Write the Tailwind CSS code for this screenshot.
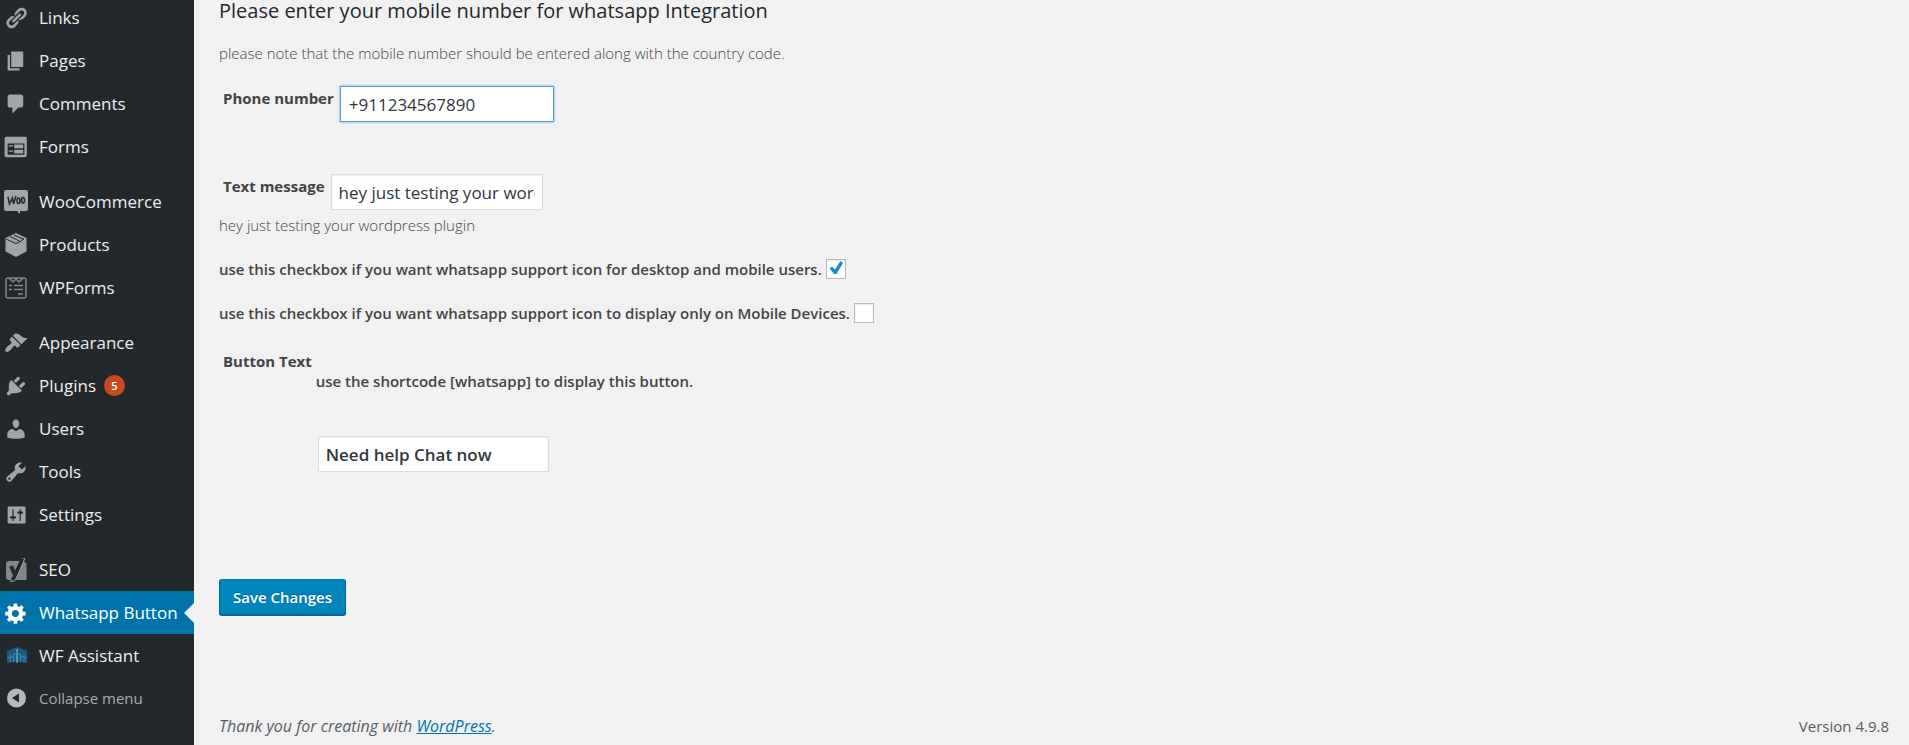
<!DOCTYPE html>
<html lang="en">
<head>
<meta charset="utf-8">
<title>Whatsapp Button</title>
<script src="https://cdn.jsdelivr.net/npm/@tailwindcss/browser@4"></script>
</head>
<body class="bg-[#f1f1f1] text-[#444] font-['Open_Sans','Noto_Sans',sans-serif] text-[15px] leading-5">
<div class="flex h-screen overflow-hidden">
  <nav aria-label="Admin menu" class="w-[194px] shrink-0 bg-[#23282d] text-[#eee] text-[17px] font-normal">
    <ul class="-mt-1 [&_a]:flex [&_a]:h-[43px] [&_a]:items-center [&_a]:gap-[11px] [&_a]:pl-1 [&_svg]:size-6 [&_svg]:shrink-0 [&_svg]:fill-[#a0a5aa]">
      <li><a href="#"><svg viewBox="0 0 20 20"><path d="M17.74 2.76c1.68 1.69 1.68 4.41 0 6.1l-1.53 1.52c-1.12 1.12-2.7 1.47-4.14 1.09l2.62-2.61.76-.77.76-.76c.84-.84.84-2.2 0-3.04-.84-.85-2.2-.85-3.04 0l-.77.76-3.38 3.38c-.37-1.44-.02-3.02 1.1-4.14l1.52-1.53c1.69-1.68 4.42-1.68 6.1 0zM8.59 13.43l5.34-5.34c.42-.42.42-1.1 0-1.52-.44-.43-1.13-.39-1.53 0l-5.33 5.34c-.42.42-.42 1.1 0 1.52.44.43 1.13.39 1.52 0zm-.76 2.29l4.14-4.15c.38 1.44.03 3.02-1.09 4.14l-1.52 1.53c-1.69 1.68-4.41 1.68-6.1 0-1.68-1.68-1.68-4.42 0-6.1l1.53-1.52c1.12-1.12 2.7-1.47 4.14-1.1l-4.14 4.15c-.85.84-.85 2.2 0 3.05.84.84 2.2.84 3.04 0z"/></svg>Links</a></li>
      <li><a href="#"><svg viewBox="0 0 20 20"><path d="M6 15V2h10v13H6zm-1 1h8v2H3V5h2v11z"/></svg>Pages</a></li>
      <li><a href="#"><svg viewBox="0 0 20 20"><path d="M5 2h9c1.1 0 2 .9 2 2v7c0 1.1-.9 2-2 2h-2l-5 5v-5H5c-1.1 0-2-.9-2-2V4c0-1.1.9-2 2-2z"/></svg>Comments</a></li>
      <li><a href="#"><svg viewBox="0 0 20 20"><path fill-rule="evenodd" d="M2 1.500h15.500q1.500 0 1.500 1.500v14q0 1.500-1.500 1.500H2Q.5 18.500.5 17V3Q.5 1.500 2 1.500zM3 7v9.500h14V7zM4 8.500h3.500v1H4zM8.500 8h7.500v3H8.500zM4 13h3.500v1H4zM8.500 12.300h7.500v3.200H8.500z"/></svg>Forms</a></li>
      <li class="mt-3"><a href="#"><svg viewBox="0 0 24 24"><path d="M2 0h20q2 0 2 2v17q0 2-2 2h-6v3l-3-3H2q-2 0-2-2V2Q0 0 2 0z"/><path class="fill-none stroke-[#23282d] stroke-[1.500]" d="M4 7l1.500 7L8.500 8l1 6L12 6M14.500 8c-2 0-2 5.500 0 5.500s2-5.500 0-5.500zM19 7.500c-2 0-2 5.500 0 5.500s2-5.500 0-5.500z"/></svg>WooCommerce</a></li>
      <li><a href="#"><svg viewBox="0 0 24 24"><path d="M12 0l10.500 5v13.500L12 24 1.500 18.500V5z"/><path class="fill-none stroke-[#23282d]" d="M2 6L12 10.500 16.500 8.500M6 3.500L16.500 8.500 20 5.500M10 2L20 6.500"/></svg>Products</a></li>
      <li><a href="#"><svg viewBox="0 0 24 24"><path class="fill-none stroke-[#82878c] stroke-[1.500]" d="M4 2h16q2 0 2 2v16q0 2-2 2H4q-2 0-2-2V4q0-2 2-2zM5 2l4 4 3-3 3 3 4-4M5 9.500h3M10 9.500h9M5 13.500h3M10 13.500h9M14 18h5"/></svg>WPForms</a></li>
      <li class="mt-3"><a href="#"><svg viewBox="0 0 20 20"><path d="M14.480 11.060L7.410 3.990l1.500-1.500c.5-.56 2.300-.47 3.510.32 1.210.8 1.430 1.280 2.910 2.100 1.180.64 2.450 1.260 4.450.85zm-.71.71L6.700 4.700 4.930 6.470c-.39.39-.39 1.020 0 1.410l1.060 1.060c.39.39.39 1.030 0 1.420-.6.6-1.430 1.110-2.210 1.690-.35.26-.7.53-1.010.84C1.430 14.230.4 16.080 1.400 17.070c.99 1 2.840-.03 4.180-1.360.31-.31.58-.66.850-1.020.57-.78 1.080-1.610 1.690-2.210.39-.39 1.020-.39 1.410 0l1.060 1.060c.39.39 1.020.39 1.410 0z"/></svg>Appearance</a></li>
      <li><a href="#"><svg viewBox="0 0 20 20"><path d="M13.110 4.360L9.870 7.600 8 5.730l3.240-3.240c.35-.34 1.050-.2 1.560.32.520.51.660 1.210.310 1.550zm-8 1.770l.91-1.120 9.010 9.010-1.190.84c-.71.71-2.630 1.160-3.820 1.160H6.140L4.900 17.260c-.59.59-1.540.59-2.120 0-.59-.58-.59-1.530 0-2.120l1.240-1.240v-3.880c0-1.130.4-3.190 1.090-3.890zm7.260 3.970l3.240-3.240c.34-.35 1.040-.21 1.550.310.520.510.660 1.210.310 1.550l-3.240 3.250z"/></svg><span class="flex items-center gap-2">Plugins<span class="flex size-[21px] items-center justify-center rounded-full bg-[#ca4a1f] text-[11px] font-semibold text-white">5</span></span></a></li>
      <li><a href="#"><svg viewBox="0 0 20 20"><path d="M10 9.250c-2.270 0-2.730-3.440-2.730-3.440C7 4.020 7.820 2 9.970 2c2.160 0 2.980 2.020 2.710 3.810 0 0-.41 3.440-2.680 3.440zm0 2.570L12.720 10c2.390 0 4.520 2.330 4.520 4.530v2.490s-3.650 1.130-7.240 1.130c-3.650 0-7.240-1.130-7.240-1.130v-2.490c0-2.250 1.940-4.480 4.470-4.480z"/></svg>Users</a></li>
      <li><a href="#"><svg viewBox="0 0 20 20"><path d="M16.680 9.770c-1.340 1.340-3.300 1.670-4.950.99l-5.410 6.520c-.99.99-2.590.99-3.580 0s-.99-2.590 0-3.570l6.520-5.420c-.68-1.650-.35-3.610.99-4.950 1.280-1.280 3.120-1.620 4.720-1.060l-2.890 2.890 2.820 2.820 2.860-2.870c.53 1.580.18 3.390-1.080 4.650zM3.810 16.210c.4.390 1.040.39 1.430 0 .4-.4.4-1.040 0-1.430-.39-.4-1.030-.4-1.430 0-.39.390-.39 1.030 0 1.430z"/></svg>Tools</a></li>
      <li><a href="#"><svg viewBox="0 0 20 20"><path fill-rule="evenodd" d="M18 16V4c0-.55-.45-1-1-1H4c-.55 0-1 .45-1 1v12c0 .55.45 1 1 1h13c.55 0 1-.45 1-1zM8 11h1c.55 0 1 .45 1 1s-.45 1-1 1H8v1.500c0 .28-.22.5-.5.5s-.5-.22-.5-.5V13H6c-.55 0-1-.45-1-1s.45-1 1-1h1V5.500c0-.28.22-.5.5-.5s.5.220.5.5V11zm5-2h-1c-.55 0-1-.45-1-1s.45-1 1-1h1v-1.500c0-.28.22-.5.5-.5s.5.220.5.5V7h1c.55 0 1 .45 1 1s-.45 1-1 1h-1v5.500c0 .28-.22.5-.5.5s-.5-.22-.5-.5V9z"/></svg>Settings</a></li>
      <li class="mt-3"><a href="#"><svg viewBox="0 0 24 24"><path class="fill-[#82878c]" d="M5 3h13l3 1 1.500 2v16H5q-3 0-3-3V6q0-3 3-3z"/><path class="fill-none stroke-[#23282d] stroke-[4]" d="M7 8l4 9M19 0l-8 18q-1 4-4 4"/><path class="fill-none stroke-[#a0a5aa] stroke-[1]" d="M18 0h3l-8 19q-2 5-6 5v-3"/></svg>SEO</a></li>
      <li class="relative bg-[#0073aa] text-white"><a href="#" aria-current="page"><svg viewBox="0 0 20 20"><path class="fill-white" d="M18 12h-2.180c-.17.700-.44 1.350-.81 1.930l1.540 1.540-2.100 2.100-1.540-1.540c-.58.360-1.230.630-1.910.790V19H8v-2.180c-.68-.16-1.330-.43-1.910-.79l-1.540 1.540-2.120-2.120 1.540-1.540c-.36-.58-.63-1.230-.79-1.910H1V9.030h2.170c.16-.7.440-1.350.800-1.940L2.430 5.550l2.100-2.100 1.540 1.540c.58-.37 1.240-.64 1.930-.81V2h3v2.180c.68.160 1.330.430 1.910.790l1.540-1.540 2.120 2.120-1.540 1.540c.36.590.640 1.240.800 1.940H18V12zm-8.500 1.500c1.660 0 3-1.340 3-3s-1.340-3-3-3-3 1.340-3 3 1.340 3 3 3z"/></svg>Whatsapp Button</a><span class="absolute right-0 top-1/2 -translate-y-1/2 border-y-[10px] border-r-[10px] border-y-transparent border-r-[#f1f1f1]"></span></li>
      <li><a href="#"><svg viewBox="0 0 24 24"><path class="fill-[#1d5a80]" d="M3 7l10-4 10 4v12q-10-2-20 0z"/><path class="fill-none stroke-[#8cc0dc]" d="M13 5v14"/><path class="fill-none stroke-[#3d86ad]" d="M3 14q6 0 10-6 4 6 10 6M6 11v7M9.500 10v8M16.500 10v8M20 11v7"/></svg>WF Assistant</a></li>
      <li><button type="button" class="flex h-[42px] items-center gap-[11px] pl-1 text-[15px] text-[#aaa]"><svg viewBox="0 0 24 24"><path class="fill-[#b4b9be]" fill-rule="evenodd" d="M12.500 2.500a9.500 9.500 0 1 0 0 19 9.500 9.500 0 0 0 0-19zM15 7.500v9L8 12z"/></svg>Collapse menu</button></li>
    </ul>
  </nav>
  <div class="flex min-w-0 flex-1 flex-col pl-[25px] pr-5">
    <main class="flex-1">
      <h1 class="text-[20px] font-medium leading-[22px] text-[#23282d]">Please enter your mobile number for whatsapp Integration</h1>
      <form class="flex flex-col items-start">
        <p class="mt-[21px] font-[350]">please note that the mobile number should be entered along with the country code.</p>
        <div class="mt-[23px] flex gap-[6px] pl-1">
          <label for="phone" class="pt-0.5 font-bold">Phone number</label>
          <input id="phone" type="text" value="+911234567890" class="h-9 w-[214px] border border-[#5b9dd9] bg-white px-2 text-[17px] text-[#32373c] shadow-[0_0_2px_rgba(30,140,190,0.8)] outline-none">
        </div>
        <div class="mt-[52px] flex gap-[6px] pl-1">
          <label for="message" class="pt-0.5 font-bold">Text message</label>
          <input id="message" type="text" value="hey just testing your wordpress plugin" class="h-9 w-[212px] border border-[#ddd] bg-white px-[7px] text-[17px] text-[#32373c] shadow-[inset_0_1px_2px_rgba(0,0,0,0.07)] outline-none">
        </div>
        <p class="mt-[5px] font-[350]">hey just testing your wordpress plugin</p>
        <div class="mt-6 flex items-center gap-1 font-semibold">
          <label for="all">use this checkbox if you want whatsapp support icon for desktop and mobile users.</label>
          <span class="relative flex"><input id="all" type="checkbox" checked class="size-5 appearance-none border border-[#b4b9be] bg-white shadow-[inset_0_1px_2px_rgba(0,0,0,0.1)]"><svg viewBox="0 0 20 20" class="pointer-events-none absolute inset-0 size-5 fill-[#1e8cbe]"><path d="M14.500 2L17 4l-6.500 11H8L3.500 9.500 6 7.500l3 3z"/></svg></span>
        </div>
        <div class="mt-6 flex items-center gap-1 font-semibold">
          <label for="mobile">use this checkbox if you want whatsapp support icon to display only on Mobile Devices.</label>
          <input id="mobile" type="checkbox" class="size-5 appearance-none border border-[#b4b9be] bg-white shadow-[inset_0_1px_2px_rgba(0,0,0,0.1)]">
        </div>
        <div class="mt-7 flex gap-1 pl-1 font-semibold">
          <label for="btn" class="font-bold">Button Text</label>
          <div class="pt-5">
            <p>use the shortcode [whatsapp] to display this button.</p>
            <input id="btn" type="text" value="Need help Chat now" class="ml-0.5 mt-[45px] h-9 w-[231px] border border-[#ddd] bg-white px-[7px] text-[17px] text-[#32373c] shadow-[inset_0_1px_2px_rgba(0,0,0,0.07)] outline-none">
          </div>
        </div>
        <button type="submit" class="mt-[107px] h-9 rounded-[3px] border border-[#006799] border-t-[#0073aa] bg-[#0085ba] px-[13px] font-semibold text-white shadow-[0_1px_0_#006799] [text-shadow:0_-1px_1px_#006799]">Save Changes</button>
      </form>
    </main>
    <footer class="flex justify-between pb-[9px] font-medium text-[#555d66]">
      <p class="text-base leading-5 italic">Thank you for creating with <a href="#" class="text-[#0073aa] underline">WordPress</a>.</p>
      <p>Version 4.9.8</p>
    </footer>
  </div>
</div>
</body>
</html>
